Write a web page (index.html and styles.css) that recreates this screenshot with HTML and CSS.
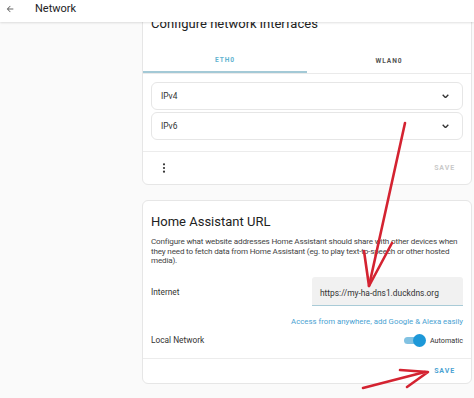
FILE: index.html
```html
<!DOCTYPE html>
<html>
<head>
<meta charset="utf-8">
<link rel="stylesheet" href="styles.css">
</head>
<body>
<header class="topbar">
  <svg class="back" viewBox="0 0 24 24" width="10" height="10"><path d="M20,11V13H8L13.5,18.5L12.08,19.92L4.16,12L12.08,4.08L13.5,5.5L8,11H20Z" fill="#666"/></svg>
  <span class="topbar-title">Network</span>
</header>
<main class="content">
  <section class="card card-net">
    <h2 class="card-title">Configure network interfaces</h2>
    <div class="tabs">
      <div class="tab active">ETH0</div>
      <div class="tab">WLAN0</div>
    </div>
    <div class="panels">
      <div class="panel"><span>IPv4</span><svg class="chev" viewBox="0 0 10 6" width="7" height="4.5"><path d="M1,1 L5,5 L9,1" fill="none" stroke="#333" stroke-width="2"/></svg></div>
      <div class="panel"><span>IPv6</span><svg class="chev" viewBox="0 0 10 6" width="7" height="4.5"><path d="M1,1 L5,5 L9,1" fill="none" stroke="#333" stroke-width="2"/></svg></div>
    </div>
    <div class="actions actions-net">
      <svg class="dots" viewBox="0 0 4 12" width="4" height="10"><circle cx="2" cy="1.6" r="1.3" fill="#333"/><circle cx="2" cy="6" r="1.3" fill="#333"/><circle cx="2" cy="10.4" r="1.3" fill="#333"/></svg>
      <span class="btn btn-disabled">SAVE</span>
    </div>
  </section>

  <section class="card card-url">
    <h2 class="card-title">Home Assistant URL</h2>
    <p class="desc">Configure what website addresses Home Assistant should share with other devices when they need to fetch data from Home Assistant (eg. to play text-to-speech or other hosted media).</p>
    <div class="row row-internet">
      <span class="label">Internet</span>
      <div class="field">https://my-ha-dns1.duckdns.org</div>
    </div>
    <div class="link-row"><span class="link">Access from anywhere, add Google &amp; Alexa easily</span></div>
    <div class="row row-local">
      <span class="label">Local Network</span>
      <div class="switch-wrap">
        <span class="switch"><span class="knob"></span></span>
        <span class="auto">Automatic</span>
      </div>
    </div>
    <div class="actions actions-url">
      <span class="btn btn-primary">SAVE</span>
    </div>
  </section>
  <div class="next-card"></div>
</main>
<svg class="annot" width="474" height="398" viewBox="0 0 474 398">
  <g fill="none" stroke="#d42331" stroke-width="2.6" stroke-linecap="round" stroke-linejoin="round">
    <path d="M405,123 L369,286"/>
    <path d="M364,251 L369,286 L392,243"/>
    <path d="M363,388 L425,372"/>
    <path d="M400,370 L428,372 L407,387"/>
  </g>
</svg>
</body>
</html>
```
FILE: styles.css
```css
* { box-sizing: border-box; }
html, body { margin: 0; padding: 0; }
body {
  width: 474px;
  height: 398px;
  overflow: hidden;
  background: #fafafa;
  font-family: Roboto, "Liberation Sans", sans-serif;
  color: #212121;
  position: relative;
}
.topbar {
  position: absolute;
  top: 0; left: 0; right: 0;
  height: 22px;
  background: #fff;
  box-shadow: 0 1px 2px rgba(0,0,0,0.12);
  display: flex;
  align-items: flex-start;
  padding: 3px 0 0 5px;
  z-index: 5;
}
.back { margin-top: 1px; }
.topbar-title {
  margin-left: 20px;
  font-size: 11px;
  line-height: 12px;
  color: #222;
}
.content {
  display: flex;
  flex-direction: column;
  padding: 3px 2px 0 142px;
  gap: 15px;
}
.card {
  background: #fff;
  border: 1px solid #e6e6e6;
  border-radius: 6px;
}
.card-title {
  margin: 0;
  padding: 10px 8px 0;
  font-size: 13px;
  line-height: 20px;
  font-weight: 400;
  color: #222;
}
.card-url .card-title { padding-top: 11px; }
.tabs {
  display: flex;
  margin-top: 11px;
  border-bottom: 1px solid #eaeaea;
}
.tab {
  flex: 1;
  height: 28px;
  display: flex;
  align-items: center;
  justify-content: center;
  padding-top: 3px;
  font-size: 6.6px;
  font-weight: 700;
  letter-spacing: 0.9px;
  color: #555;
}
.tab.active {
  color: #62b3d0;
  border-bottom: 2px solid #a3c9d6;
}
.panels {
  display: flex;
  flex-direction: column;
  gap: 2px;
  padding: 8px 8px 11px;
}
.panel {
  height: 28px;
  border: 1px solid #e6e6e6;
  border-radius: 6px;
  display: flex;
  align-items: center;
  justify-content: space-between;
  padding: 0 13px 0 9px;
  font-size: 8.4px;
  color: #333;
}
.actions {
  border-top: 1px solid #ececec;
  display: flex;
  align-items: center;
  justify-content: space-between;
}
.actions-net {
  height: 33px;
  padding: 0 16px 0 19px;
}
.actions-url {
  height: 25px;
  justify-content: flex-end;
  padding: 0 16px 0 19px;
}
.btn {
  font-size: 7px;
  font-weight: 700;
  letter-spacing: 0.9px;
}
.btn-disabled { color: #c9c9c9; }
.btn-primary { color: #4aa2d2; }
.desc {
  margin: 5px 0 0;
  padding: 0 8px;
  font-size: 8.1px;
  letter-spacing: -0.17px;
  line-height: 9.7px;
  color: #444;
}
.row {
  display: flex;
  align-items: center;
  justify-content: space-between;
  padding: 0 8px;
}
.row-internet { margin-top: 11px; }
.label {
  font-size: 8.3px;
  color: #333;
}
.field {
  width: 151px;
  height: 29px;
  background: #f1f1f1;
  border-bottom: 1px solid #a9cbd7;
  border-radius: 3px 3px 0 0;
  display: flex;
  align-items: center;
  padding: 3px 8px 0;
  font-size: 8.4px;
  color: #333;
}
.link-row {
  display: flex;
  justify-content: flex-end;
  padding: 0 8px;
  margin-top: 10px;
  line-height: 11px;
}
.link {
  font-size: 7.8px;
  color: #4aa2d2;
}
.row-local {
  margin-top: 6px;
  height: 14px;
}
.switch-wrap {
  display: flex;
  align-items: center;
  gap: 7px;
}
.switch {
  position: relative;
  width: 19px;
  height: 7px;
  border-radius: 4px;
  background: #82c2e2;
}
.knob {
  position: absolute;
  right: -3px;
  top: -3px;
  width: 13px;
  height: 13px;
  border-radius: 50%;
  background: #1d98d8;
}
.auto {
  font-size: 7.2px;
  color: #333;
}
.row-local + .actions { margin-top: 11px; }
.next-card {
  height: 30px;
  background: #fff;
  border: 1px solid #ececec;
  border-radius: 6px;
  margin-top: -1px;
}
.annot {
  position: absolute;
  top: 0; left: 0;
  pointer-events: none;
  z-index: 10;
}
```
